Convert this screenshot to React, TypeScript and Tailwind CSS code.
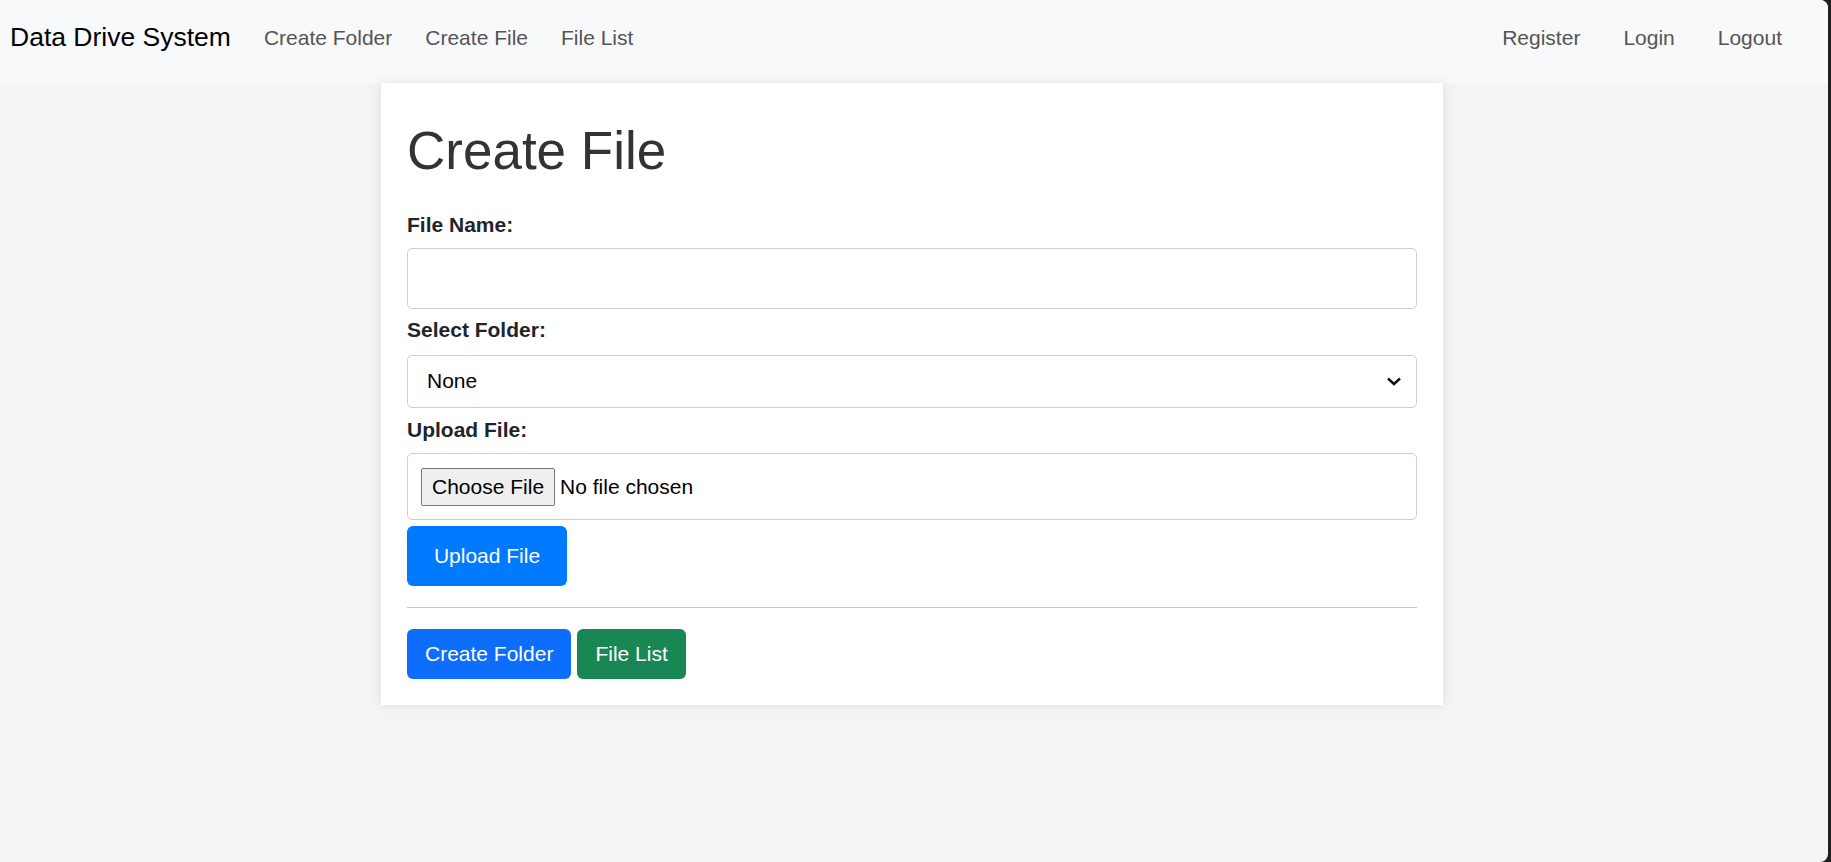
import React from "react";

export default function App() {
  return (
    <div className="w-[1831px] h-[862px] bg-[#1f1f1f] flex" style={{ fontFamily: '"Liberation Sans", Arial, sans-serif' }}>
      <div className="flex-1 mr-[3px] bg-[#f4f4f4] rounded-tr-[8px] rounded-br-[8px] overflow-hidden flex flex-col">
        <nav className="h-[83px] bg-[#f8f9fa] flex items-center justify-between pb-[8px]">
          <div className="flex items-center">
            <span className="ml-[10px] text-[26.5px] text-black leading-none">Data Drive System</span>
            <div className="flex items-center ml-[33px] gap-[33px] text-[21px] text-[#555]">
              <span>Create Folder</span>
              <span>Create File</span>
              <span>File List</span>
            </div>
          </div>
          <div className="flex items-center gap-[43px] mr-[46px] text-[21px] text-[#555]">
            <span>Register</span>
            <span>Login</span>
            <span>Logout</span>
          </div>
        </nav>
        <div className="flex justify-center pr-[4px]">
          <div className="w-[1062px] bg-white shadow-[0_0_10px_rgba(0,0,0,0.1)] px-[26px] pt-[36px] pb-[26px]">
            <h1 className="text-[53px] leading-[1.2] text-[#333] font-normal">Create File</h1>
            <label className="block mt-[26px] mb-[8px] text-[21px] leading-[1.5] font-bold text-[#212529]">File Name:</label>
            <div className="h-[61px] border border-[#cfcfcf] rounded-[5px] bg-white" />
            <label className="block mt-[5px] mb-[9px] text-[21px] leading-[1.5] font-bold text-[#212529]">Select Folder:</label>
            <div className="h-[53px] border border-[#cfcfcf] rounded-[5px] bg-white flex items-center justify-between pl-[19px] pr-[14px] text-[21px] text-black">
              <span>None</span>
              <svg width="16" height="12" viewBox="0 0 16 12" fill="none">
                <path d="M2 3.5 L8 9 L14 3.5" stroke="#111" strokeWidth="2.4" />
              </svg>
            </div>
            <label className="block mt-[6px] mb-[8px] text-[21px] leading-[1.5] font-bold text-[#212529]">Upload File:</label>
            <div className="h-[67px] border border-[#cfcfcf] rounded-[5px] bg-white flex items-center pl-[13px] text-[21px] text-black">
              <span className="h-[38px] px-[10px] flex items-center bg-[#efefef] border border-[#767676] rounded-[2px]">Choose File</span>
              <span className="ml-[5px]">No file chosen</span>
            </div>
            <button className="mt-[6px] h-[60px] w-[160px] rounded-[6px] bg-[#007bff] text-white text-[21px]">Upload File</button>
            <hr className="mt-[21px] mb-[21px] border-t border-[#c8c8c8]" />
            <div className="flex gap-[6px]">
              <button className="h-[50px] px-[18px] rounded-[6px] bg-[#0d6efd] text-white text-[21px]">Create Folder</button>
              <button className="h-[50px] px-[18px] rounded-[6px] bg-[#198754] text-white text-[21px]">File List</button>
            </div>
          </div>
        </div>
      </div>
    </div>
  );
}
